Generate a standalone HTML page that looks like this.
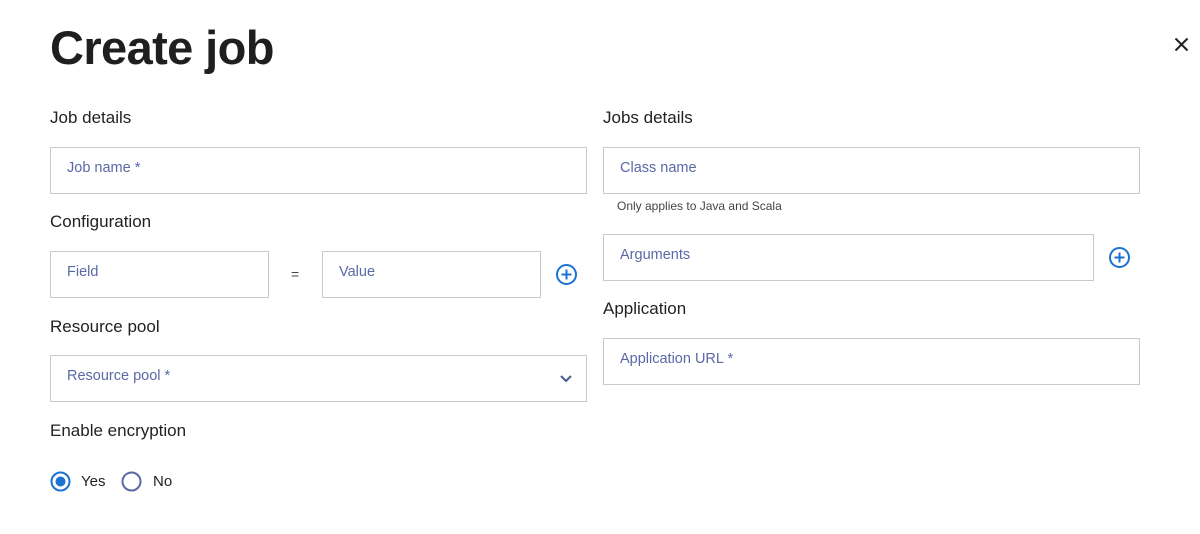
<!DOCTYPE html><html><head><style>
body{margin:0;width:1200px;height:534px;background:#fff;font-family:"Liberation Sans",sans-serif;position:relative;overflow:hidden;color:#222}
.a{position:absolute}
h1{position:absolute;left:50px;top:20px;margin:0;font-size:47px;font-weight:bold;color:#1f1f1f;letter-spacing:-0.6px}
.l{position:absolute;font-size:17px;color:#222;line-height:20px}
.b{position:absolute;border:1px solid #c9c9c9;box-sizing:border-box;height:47px;background:#fff}
.b span{position:absolute;left:16px;top:12px;font-size:14.5px;color:#5a69a6}
</style></head><body>
<h1>Create job</h1>
<svg class="a" style="left:1174px;top:37px" width="15" height="15" viewBox="0 0 15 15"><path d="M1.5 1.5L13.5 13.5M13.5 1.5L1.5 13.5" stroke="#222" stroke-width="2"/></svg>
<div class="l" style="left:50px;top:108px">Job details</div>
<div class="b" style="left:50px;top:147px;width:537px"><span>Job name *</span></div>
<div class="l" style="left:50px;top:212px">Configuration</div>
<div class="b" style="left:50px;top:251px;width:219px"><span>Field</span></div>
<div class="a" style="left:291px;top:266px;font-size:14px;color:#444">=</div>
<div class="b" style="left:322px;top:251px;width:219px"><span>Value</span></div>
<svg class="a" style="left:555px;top:263px" width="23" height="23" viewBox="0 0 23 23"><circle cx="11.5" cy="11.5" r="9.5" fill="none" stroke="#1a73d0" stroke-width="2"/><path d="M11.5 6.5v10M6.5 11.5h10" stroke="#1a73d0" stroke-width="2"/></svg>
<div class="l" style="left:50px;top:317px">Resource pool</div>
<div class="b" style="left:50px;top:355px;width:537px"><span>Resource pool *</span>
<svg class="a" style="left:508px;top:18px" width="14" height="10" viewBox="0 0 14 10"><path d="M2 2l5 5 5-5" fill="none" stroke="#4a5a96" stroke-width="2"/></svg></div>
<div class="l" style="left:50px;top:421px">Enable encryption</div>
<svg class="a" style="left:49px;top:470px" width="23" height="23"><circle cx="11.5" cy="11.5" r="9" fill="none" stroke="#1a73d0" stroke-width="2"/><circle cx="11.5" cy="11.5" r="5" fill="#1a73d0"/></svg>
<div class="a" style="left:81px;top:473px;font-size:15px">Yes</div>
<svg class="a" style="left:120px;top:470px" width="23" height="23"><circle cx="11.5" cy="11.5" r="9" fill="none" stroke="#5a69a6" stroke-width="2"/></svg>
<div class="a" style="left:153px;top:473px;font-size:15px">No</div>
<div class="l" style="left:603px;top:108px">Jobs details</div>
<div class="b" style="left:603px;top:147px;width:537px"><span>Class name</span></div>
<div class="a" style="left:617px;top:199px;font-size:12px;color:#444">Only applies to Java and Scala</div>
<div class="b" style="left:603px;top:234px;width:491px"><span>Arguments</span></div>
<svg class="a" style="left:1108px;top:246px" width="23" height="23" viewBox="0 0 23 23"><circle cx="11.5" cy="11.5" r="9.5" fill="none" stroke="#1a73d0" stroke-width="2"/><path d="M11.5 6.5v10M6.5 11.5h10" stroke="#1a73d0" stroke-width="2"/></svg>
<div class="l" style="left:603px;top:299px">Application</div>
<div class="b" style="left:603px;top:338px;width:537px"><span>Application URL *</span></div>
</body></html>
